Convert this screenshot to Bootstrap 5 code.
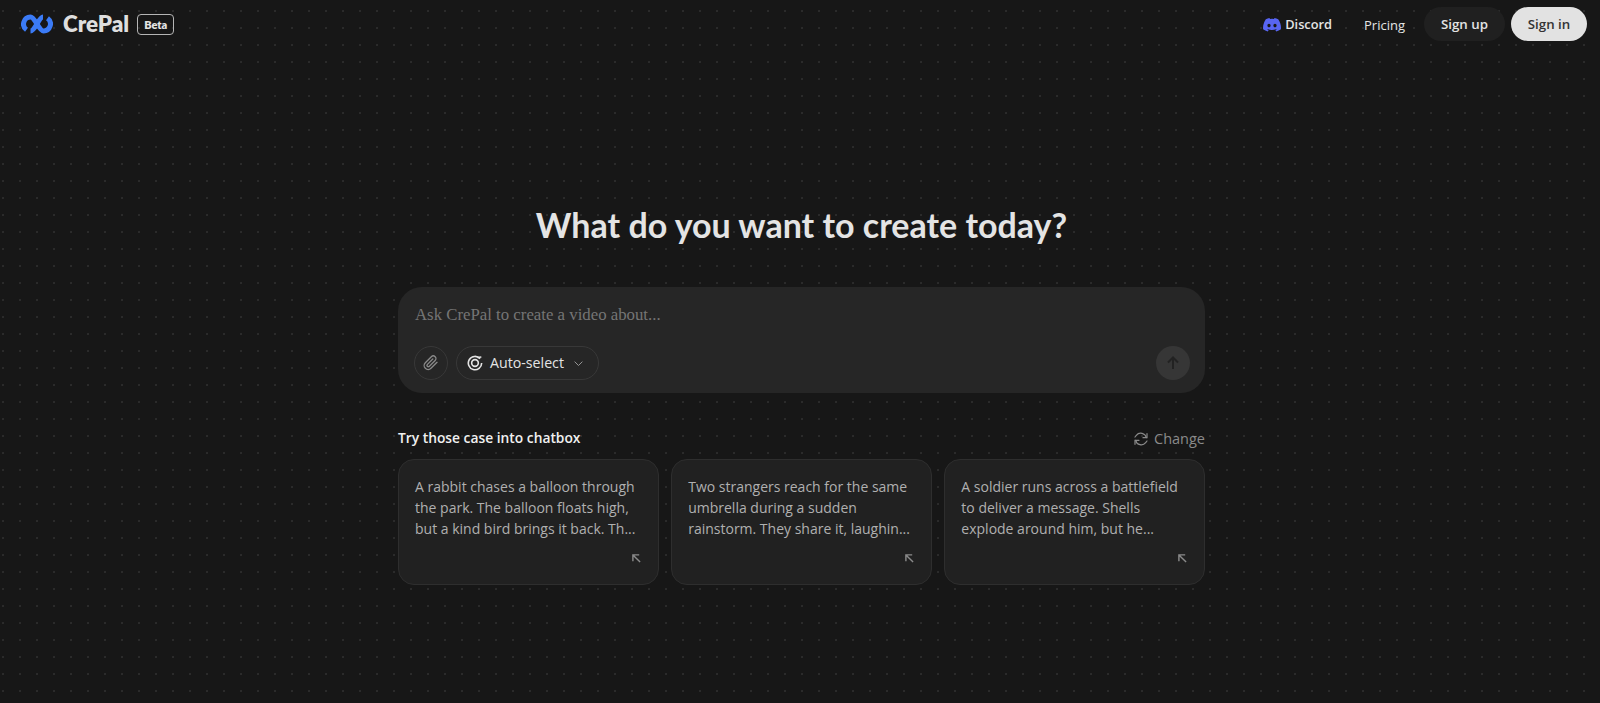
<!DOCTYPE html>
<html lang="en"><head><meta charset="utf-8"><title>CrePal</title>
<link href="https://cdn.jsdelivr.net/npm/bootstrap@5.3.0/dist/css/bootstrap.min.css" rel="stylesheet">
<style>
html,body{height:703px;overflow:hidden}
body{background-color:#171717;background-image:radial-gradient(circle at 1px 1px,#2b2b2b 0.7px,transparent 1px);background-size:17px 17px;background-position:2px 10px;font-family:"Open Sans","Noto Sans",sans-serif;color:#e4e4e4}
.topbar{height:48px;padding:0 13px 0 21px}
.brand-name{font-family:Lato,sans-serif;font-weight:800;font-size:22.4px;color:#dedede;margin-left:10px}
.beta-tag{font-family:Lato,sans-serif;font-weight:800;font-size:11px;line-height:1;border:1px solid #b5b5b5;border-radius:4px;padding:4px 6px;margin-left:8px;color:#e4e4e4}
.nav-item-text{font-size:12.8px;color:#e4e4e4;text-decoration:none}
.pricing-link{font-size:13px;padding-top:3px;margin-right:19px}
.discord-link{margin-right:32px;padding-top:1px}
.pill-dark{background:#202020;color:#e4e4e4;font-size:13.3px;font-weight:600;border-radius:17px;height:34px;padding:1px 0 0;border:0;width:81px}
.pill-light{background:#e2e2e2;color:#333;font-size:13.3px;font-weight:600;border-radius:17px;height:34px;border:0;width:76px;padding:1px 0 0;margin-left:6px}
.hero-title{font-family:Lato,sans-serif;font-weight:700;font-size:34px;color:#e4e4e4;margin:0;line-height:44px;padding-top:155px;text-align:center}
.page-main{padding-left:3px}
.main-col{width:807px}
.chat-box{background:#262626;border-radius:24px;height:106px;margin-top:40px;padding:18px 15px 13px 16px}
.chat-input{font-family:"Liberation Serif",serif;font-size:16.8px;line-height:20px;color:#757575;padding-left:1px}
.circle-btn{width:34px;height:34px;border-radius:50%;border:1px solid #383838;background:transparent}
.model-btn{height:34px;border-radius:17px;border:1px solid #383838;background:transparent;color:#e4e4e4;font-size:14.2px;padding:0 15px 0 10px}
.model-label{margin:0 10px 0 7px}
.send-btn{width:34px;height:34px;border-radius:50%;background:#363636;border:0}
.try-row{margin-top:25px;height:41px}
.try-label{font-size:13.8px;font-weight:600;color:#f0f0f0}
.change-link{font-size:14.5px;color:#8a8a8a;gap:5px}
.case-row{gap:12.5px}
.case-card{flex:1 1 0;height:126px;background:#212121;border:1px solid #2e2e2e;border-radius:16px;padding:16px;position:relative;font-size:14px;line-height:21px;color:#b0b0b0}
.corner-icon{position:absolute;right:17px;bottom:21px}
</style></head><body>
<nav class="topbar d-flex align-items-center">
<svg width="32" height="20" viewBox="0 0 32 20" fill="none" stroke="#3b7bf6" stroke-width="5"><path d="M26.500 4.300A7 7 0 0 1 22.500 17C18 17 14 3 9.500 3A7 7 0 0 0 5.500 15.700"/><path d="M9.500 17C14 17 18 3 22 3"/></svg>
<span class="brand-name">CrePal</span><span class="beta-tag">Beta</span>
<div class="ms-auto d-flex align-items-center">
<a class="nav-item-text discord-link fw-semibold d-flex align-items-center" href="#"><svg class="me-1" width="18" height="14" viewBox="0 0 18 14"><path fill="#5865f2" d="M15.2 1.2A15 15 0 0 0 11.5 0l-.5 1a14 14 0 0 0-4 0L6.500 0a15 15 0 0 0-3.700 1.200C.5 4.700-.2 8 .1 11.300A15 15 0 0 0 4.700 13.600l1-1.500-1.600-.8.400-.3a10.500 10.500 0 0 0 9 0l.4.300-1.600.8 1 1.500a15 15 0 0 0 4.600-2.300c.4-3.800-.6-7.100-2.700-10.100zM6 9.300c-.9 0-1.600-.8-1.600-1.800S5.100 5.700 6 5.700s1.600.8 1.600 1.800S6.900 9.300 6 9.300zm6 0c-.9 0-1.600-.8-1.600-1.800s.7-1.800 1.600-1.800 1.600.8 1.600 1.800-.7 1.800-1.600 1.800z"/></svg>Discord</a>
<a class="nav-item-text pricing-link" href="#">Pricing</a>
<button class="pill-dark btn">Sign up</button>
<button class="pill-light btn">Sign in</button>
</div>
</nav>
<main class="page-main d-flex flex-column align-items-center">
<h1 class="hero-title">What do you want to create today?</h1>
<div class="main-col">
<div class="chat-box d-flex flex-column justify-content-between">
<div class="chat-input">Ask CrePal to create a video about...</div>
<div class="d-flex align-items-center gap-2">
<button class="circle-btn d-flex align-items-center justify-content-center p-0"><svg width="16" height="16" viewBox="0 0 24 24" fill="none" stroke="#8a8a8a" stroke-width="2" stroke-linecap="round"><path d="M21 11 12 20a6 6 0 0 1-8.500-8.500l9-9a4 4 0 0 1 5.700 5.700l-9 9a2 2 0 0 1-2.800-2.800l8.300-8.300"/></svg></button>
<button class="model-btn d-flex align-items-center"><svg width="16" height="16" viewBox="0 0 24 24" fill="none" stroke="#e4e4e4" stroke-width="2.400"><path d="M19.500 5.500A10 10 0 1 0 22 12"/><circle cx="12" cy="12" r="5"/><path d="M15.500 3.800 21.500 3"/></svg><span class="model-label">Auto-select</span><svg width="9" height="9" viewBox="0 0 12 12" fill="none" stroke="#999" stroke-width="1.300"><path d="M.8 3.500 6 8.700 11.200 3.500"/></svg></button>
<button class="send-btn ms-auto d-flex align-items-center justify-content-center p-0"><svg width="16" height="16" viewBox="0 0 16 16" fill="none" stroke="#222" stroke-width="2"><path d="M8 14V2.500M3 7.500l5-5 5 5"/></svg></button>
</div></div>
<div class="try-row d-flex align-items-center justify-content-between">
<span class="try-label">Try those case into chatbox</span>
<span class="change-link d-flex align-items-center"><svg width="16" height="16" viewBox="0 0 24 24" fill="none" stroke="#8a8a8a" stroke-width="1.800" stroke-linecap="round"><path d="M21 4v6h-6M3 20v-6h6"/><path d="M20 10A8.500 8.500 0 0 0 5 6.500L3 9M4 14a8.500 8.500 0 0 0 15 3.500l2-2.500"/></svg>Change</span>
</div>
<div class="d-flex case-row">
<div class="case-card">A rabbit chases a balloon through the park. The balloon floats high, but a kind bird brings it back. Th...<svg class="corner-icon" width="9" height="9" viewBox="0 0 10 10" fill="none" stroke="#8a8a8a" stroke-width="1.600"><path d="M1 8V1h7M1 1l8 8"/></svg></div>
<div class="case-card">Two strangers reach for the same umbrella during a sudden rainstorm. They share it, laughin...<svg class="corner-icon" width="9" height="9" viewBox="0 0 10 10" fill="none" stroke="#8a8a8a" stroke-width="1.600"><path d="M1 8V1h7M1 1l8 8"/></svg></div>
<div class="case-card">A soldier runs across a battlefield to deliver a message. Shells explode around him, but he...<svg class="corner-icon" width="9" height="9" viewBox="0 0 10 10" fill="none" stroke="#8a8a8a" stroke-width="1.600"><path d="M1 8V1h7M1 1l8 8"/></svg></div>
</div>
</div>
</main>
<script src="https://cdn.jsdelivr.net/npm/bootstrap@5.3.0/dist/js/bootstrap.bundle.min.js"></script>
</body></html>
